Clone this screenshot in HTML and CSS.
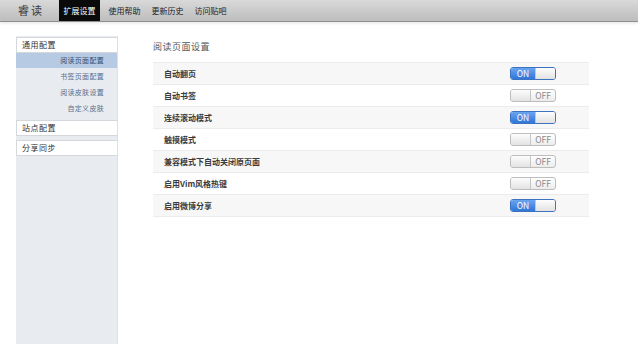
FILE: index.html
```html
<!DOCTYPE html>
<html lang="zh-CN">
<head>
    <meta charset="UTF-8">
    <title>睿读 - 扩展设置</title>
    <link rel="stylesheet" href="styles.css">
</head>
<body>

    <div class="topbar">
        <div class="logo">睿读</div>
        <a class="tab active">扩展设置</a>
        <a class="tab">使用帮助</a>
        <a class="tab">更新历史</a>
        <a class="tab">访问贴吧</a>
    </div>

    <div class="page">
        <div class="sidebar">
            <div class="group">通用配置</div>
            <div class="sub active">阅读页面配置</div>
            <div class="sub">书签页面配置</div>
            <div class="sub">阅读皮肤设置</div>
            <div class="sub">自定义皮肤</div>
            <div class="group spaced">站点配置</div>
            <div class="group spaced">分享同步</div>
        </div>

        <div class="main">
            <h3 class="title">阅读页面设置</h3>
            <div class="rows">
                <div class="row"><span>自动翻页</span><span class="switch on"><b>ON</b><i></i></span></div>
                <div class="row"><span>自动书签</span><span class="switch"><i></i><b>OFF</b></span></div>
                <div class="row"><span>连续滚动模式</span><span class="switch on"><b>ON</b><i></i></span></div>
                <div class="row"><span>触摸模式</span><span class="switch"><i></i><b>OFF</b></span></div>
                <div class="row"><span>兼容模式下自动关闭原页面</span><span class="switch"><i></i><b>OFF</b></span></div>
                <div class="row"><span>启用Vim风格热键</span><span class="switch"><i></i><b>OFF</b></span></div>
                <div class="row"><span>启用微博分享</span><span class="switch on"><b>ON</b><i></i></span></div>
            </div>
        </div>
    </div>

</body>
</html>
```

FILE: styles.css
```css
html, body {
    height: 100%;
}

body {
    margin: 0;
    font-family: "Noto Sans CJK SC", "Liberation Sans", sans-serif;
    background: #ffffff;
    color: #333333;
    display: flex;
    flex-direction: column;
}

.topbar {
    display: flex;
    align-items: stretch;
    height: 21px;
    background: linear-gradient(#d9d9d9, #bdbdbd);
    border-bottom: 1px solid #909090;
    box-shadow: 0 1px 3px rgba(0, 0, 0, 0.12);
}

.logo {
    width: 59px;
    padding-left: 18px;
    box-sizing: border-box;
    font-size: 11px;
    line-height: 21px;
    letter-spacing: 2px;
    color: #3a3a3a;
}

.tab {
    font-size: 8px;
    line-height: 21px;
    color: #222222;
    padding: 0 4.5px;
    margin-right: 2px;
}

.tab.active {
    background: #0a0a0a;
    color: #ffffff;
    margin-right: 4px;
}

.page {
    flex: 1;
    display: flex;
    padding-top: 14px;
}

.sidebar {
    width: 101px;
    margin-left: 16px;
    background: #e8ecf1;
    border-right: 1px solid #dde1e6;
    padding-top: 1px;
}

.group {
    background: #ffffff;
    border: 1px solid #d4d7db;
    border-right: none;
    height: 14px;
    line-height: 14px;
    font-size: 8px;
    padding-left: 5px;
    color: #333333;
    letter-spacing: 0.5px;
}

.group.spaced {
    margin-top: 4px;
}

.sub {
    height: 16px;
    line-height: 16px;
    font-size: 7px;
    text-align: right;
    padding-right: 13px;
    color: #5a6f8e;
    letter-spacing: 0.3px;
}

.sub.active {
    height: 15px;
    line-height: 15px;
    background: #b6cae4;
    color: #3a4d6b;
}

.main {
    margin-left: 35px;
    width: 436px;
}

.title {
    margin: 4px 0 0 0;
    height: 22px;
    font-size: 9px;
    font-weight: normal;
    color: #555555;
    letter-spacing: 0.5px;
}

.rows {
    border-bottom: 1px solid #ececec;
}

.row {
    display: flex;
    justify-content: space-between;
    align-items: center;
    height: 21px;
    border-top: 1px solid #ececec;
    padding: 0 33px 0 11px;
    font-size: 8px;
    font-weight: bold;
    color: #3a3a3a;
}

.row:nth-child(odd) {
    background: #f7f7f7;
}

.switch {
    display: flex;
    width: 46px;
    height: 13px;
    border: 1px solid #bdbdbd;
    border-radius: 3px;
    overflow: hidden;
    background: linear-gradient(#ffffff, #ececec);
    box-sizing: border-box;
}

.switch b {
    flex: 1;
    font-size: 8.5px;
    font-weight: normal;
    line-height: 11px;
    text-align: center;
    color: #888888;
}

.switch i {
    width: 19px;
    background: linear-gradient(#fdfdfd, #e2e2e2);
    border-right: 1px solid #c6c6c6;
}

.switch.on {
    border-color: #3c72c0;
}

.switch.on b {
    background: linear-gradient(#6aa5ef, #2f76d8);
    color: #ffffff;
}

.switch.on i {
    border-right: none;
    border-left: 1px solid #c6c6c6;
}
```
